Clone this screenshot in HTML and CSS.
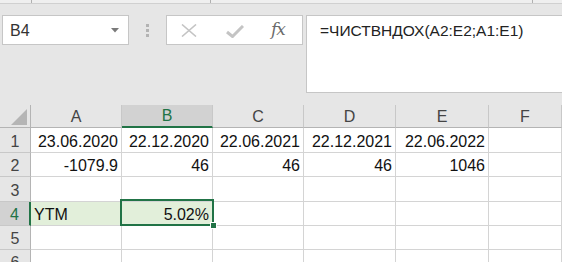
FILE: index.html
```html
<!DOCTYPE html>
<html>
<head>
<meta charset="utf-8">
<link rel="stylesheet" href="styles.css">
</head>
<body>
<div class="app">
  <div class="topstrip">
    <span class="tick t1"></span>
    <span class="tick t2"></span>
    <span class="tick t3"></span>
  </div>
  <div class="fbar">
    <div class="namebox">
      <span class="nb-text">B4</span>
      <svg class="nb-arrow" width="8" height="5" viewBox="0 0 8 5"><path d="M0 0H8L4 4.5Z" fill="#7a7a7a"/></svg>
    </div>
    <div class="dots"><i></i><i></i><i></i></div>
    <div class="fxbox">
      <svg class="ic-x" width="16" height="13" viewBox="0 0 16 13"><path d="M1 0.5L15 12.5M15 0.5L1 12.5" stroke="#c4c4c4" stroke-width="1.6" fill="none"/></svg>
      <svg class="ic-check" width="18" height="13" viewBox="0 0 18 13"><path d="M1 7L6.5 11.5L17 1" stroke="#c4c4c4" stroke-width="3" fill="none"/></svg>
      <span class="ic-fx">fx</span>
    </div>
    <div class="formula">=ЧИСТВНДОХ(A2:E2;A1:E1)</div>
  </div>
  <div class="grid">
    <div class="hd corner"><svg width="16" height="16" viewBox="0 0 16 16"><path d="M16 0V16H0Z" fill="#b5b5b5"/></svg></div>
    <div class="hd col">A</div>
    <div class="hd col sel">B</div>
    <div class="hd col">C</div>
    <div class="hd col">D</div>
    <div class="hd col">E</div>
    <div class="hd col">F</div>

    <div class="rh r25">1</div>
    <div class="c r">23.06.2020</div>
    <div class="c r">22.12.2020</div>
    <div class="c r">22.06.2021</div>
    <div class="c r">22.12.2021</div>
    <div class="c r">22.06.2022</div>
    <div class="c"></div>

    <div class="rh">2</div>
    <div class="c r">-1079.9</div>
    <div class="c r">46</div>
    <div class="c r">46</div>
    <div class="c r">46</div>
    <div class="c r">1046</div>
    <div class="c"></div>

    <div class="rh r25">3</div>
    <div class="c"></div>
    <div class="c"></div>
    <div class="c"></div>
    <div class="c"></div>
    <div class="c"></div>
    <div class="c"></div>

    <div class="rh rsel">4</div>
    <div class="c hl">YTM</div>
    <div class="c r hl active">5.02%<span class="selbox"><span class="handle"></span></span></div>
    <div class="c"></div>
    <div class="c"></div>
    <div class="c"></div>
    <div class="c"></div>

    <div class="rh">5</div>
    <div class="c"></div>
    <div class="c"></div>
    <div class="c"></div>
    <div class="c"></div>
    <div class="c"></div>
    <div class="c"></div>

    <div class="rh">6</div>
    <div class="c"></div>
    <div class="c"></div>
    <div class="c"></div>
    <div class="c"></div>
    <div class="c"></div>
    <div class="c"></div>
  </div>
</div>
</body>
</html>
```
FILE: styles.css
```css
* { box-sizing: border-box; }
html, body { margin: 0; padding: 0; }
body {
  width: 562px;
  height: 262px;
  overflow: hidden;
  background: #e6e6e6;
  font-family: "Liberation Sans", Arial, sans-serif;
  color: #222;
}
.app { width: 562px; height: 262px; overflow: hidden; }

.topstrip {
  height: 4px;
  background: #efefef;
  border-bottom: 1px solid #d0d0d0;
  display: flex;
}
.tick { width: 1px; height: 3px; background: #b0b0b0; }
.t1 { margin-left: 31px; }
.t2 { margin-left: 178px; }
.t3 { margin-left: 321px; }

.fbar {
  height: 101px;
  display: flex;
  align-items: flex-start;
  padding-top: 11px;
}
.namebox {
  margin-left: 2px;
  width: 127px;
  height: 30px;
  background: #fff;
  border: 1px solid #c6c6c6;
  display: flex;
  align-items: center;
  padding-left: 7px;
  padding-right: 9px;
}
.nb-text { flex: 1; font-size: 16px; color: #333; padding-top: 1px; }
.nb-arrow { display: block; }

.dots {
  width: 37px;
  height: 30px;
  display: flex;
  flex-direction: column;
  align-items: center;
  justify-content: center;
  gap: 2px;
}
.dots i { display: block; width: 3px; height: 3px; background: #b3b3b3; }

.fxbox {
  width: 137px;
  height: 30px;
  background: #fff;
  border: 1px solid #c6c6c6;
  display: flex;
  align-items: center;
  padding-left: 14px;
}
.ic-x { display: block; margin-top: 1px; }
.ic-check { display: block; margin-left: 29px; margin-top: 2px; }
.ic-fx {
  margin-left: 27px;
  font-family: "DejaVu Serif", "Liberation Serif", serif;
  font-style: italic;
  font-size: 17px;
  color: #6b6b6b;
  letter-spacing: -1px;
  margin-top: -2px;
}

.formula {
  flex: 1;
  margin-left: 3px;
  margin-right: -2px;
  height: 78px;
  background: #fff;
  border: 1px solid #c6c6c6;
  padding-left: 13px;
  padding-top: 6px;
  font-size: 15.5px;
  line-height: 18px;
  color: #222;
}

.grid {
  display: grid;
  grid-template-columns: 31px 91px 91px 91px 92px 93px 1fr;
  grid-template-rows: 23px 25px 24px 25px 24px 24px 24px;
}
.hd {
  background: #e6e6e6;
  border-bottom: 1px solid #b4b4b4;
  border-right: 1px solid #c8c8c8;
  display: flex;
  align-items: center;
  justify-content: center;
  font-size: 16px;
  color: #444;
  padding-top: 1px;
}
.corner { border-right: 1px solid #b4b4b4; align-items: flex-end; justify-content: flex-end; padding: 0 3px 2px 0; }
.corner svg { display: block; }
.col.sel {
  background: #d2d2d2;
  color: #217346;
  border-bottom: 2px solid #217346;
}
.rh {
  background: #e6e6e6;
  border-right: 1px solid #b4b4b4;
  border-bottom: 1px solid #c8c8c8;
  display: flex;
  align-items: flex-end;
  justify-content: center;
  font-size: 16px;
  line-height: 18px;
  color: #444;
  padding-bottom: 1px;
}
.rh.rsel {
  background: #d2d2d2;
  color: #217346;
  border-right: 2px solid #217346;
}
.c {
  background: #fff;
  border-right: 1px solid #d4d4d4;
  border-bottom: 1px solid #d4d4d4;
  display: flex;
  align-items: flex-end;
  font-size: 16px;
  line-height: 18px;
  color: #111;
  padding: 0 3px 1px 3px;
  white-space: nowrap;
}
.c.r { justify-content: flex-end; }
.c.hl { background: #e2efda; }
.active { position: relative; }
.selbox {
  position: absolute;
  top: -3px;
  left: -2px;
  right: -2px;
  bottom: -1px;
  border: 2px solid #217346;
}
.handle {
  position: absolute;
  right: -5px;
  bottom: -5px;
  width: 7px;
  height: 7px;
  background: #217346;
  border: 1px solid #fff;
}
```
